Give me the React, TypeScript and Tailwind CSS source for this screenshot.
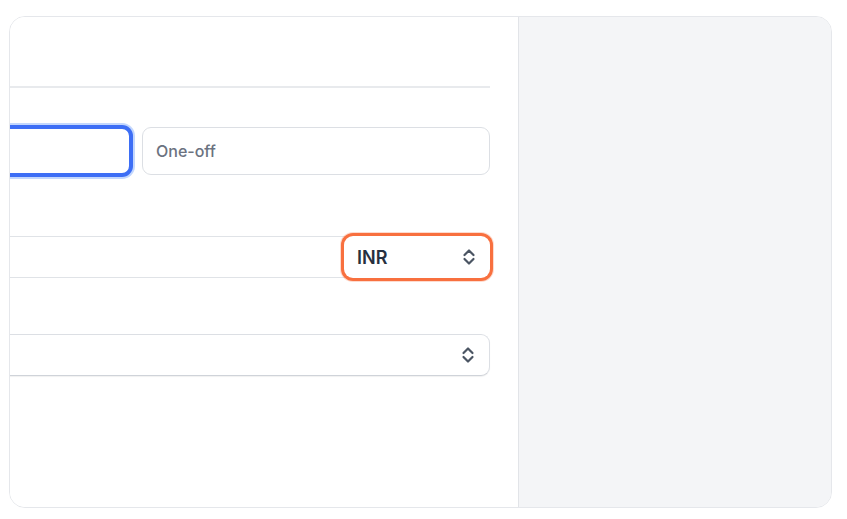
import React from "react";

function UpDown({ className }: { className?: string }) {
  return (
    <svg className={className} width="14" height="18" viewBox="0 0 14 18" fill="none" stroke="currentColor" strokeWidth="2.2" strokeLinecap="round" strokeLinejoin="round">
      <polyline points="2.5,7 7,2.5 11.5,7" />
      <polyline points="2.5,11 7,15.5 11.5,11" />
    </svg>
  );
}

export default function App() {
  return (
    <div className="w-[847px] h-[519px] bg-white pt-[16px] pl-[9px]" style={{ fontFamily: "Inter, 'Noto Sans', sans-serif" }}>
      <div className="w-[823px] h-[492px] rounded-2xl border border-[#e5e7eb] flex overflow-hidden">
        <div className="w-[508px] shrink-0 overflow-hidden flex justify-end bg-white">
          <div className="w-[760px] shrink-0 pr-[28px]">
            <div className="h-[71px] border-b-2 border-[#e8eaed]" />
            <div className="mt-[39px] flex gap-[11px]">
              <div className="w-[373px] h-[48px] rounded-[9px] border-2 border-[#3d6ef5] shadow-[0_0_0_2px_#3d6ef5,0_0_0_4px_#c3d7fd] bg-white" />
              <div className="w-[348px] h-[48px] rounded-[9px] border border-[#dcdfe4] bg-white flex items-center pl-[13px] text-[16px] font-medium text-[#6b7280]">
                One-off
              </div>
            </div>
            <div className="mt-[61px] relative h-[42px] rounded-[9px] border border-[#e0e3e7] bg-white">
              <div className="absolute top-[-1px] bottom-[-1px] right-[-1px] w-[146px] rounded-[9px] bg-white shadow-[0_0_0_3px_#f8703f,0_0_0_4px_rgba(248,112,63,0.25)] flex items-center justify-between pl-[13px] pr-[14px]">
                <span className="text-[18px] font-semibold text-[#273040]">INR</span>
                <UpDown className="text-[#4b5563]" />
              </div>
            </div>
            <div className="mt-[56px] h-[42px] rounded-[9px] border border-[#dcdfe4] border-b-[#cfd3d9] bg-white shadow-[0_1px_1px_rgba(0,0,0,0.06)] flex items-center justify-end pr-[14px]">
              <UpDown className="text-[#4b5563]" />
            </div>
          </div>
        </div>
        <div className="flex-1 border-l border-[#e2e4e8] bg-[#f4f5f7]" />
      </div>
    </div>
  );
}
